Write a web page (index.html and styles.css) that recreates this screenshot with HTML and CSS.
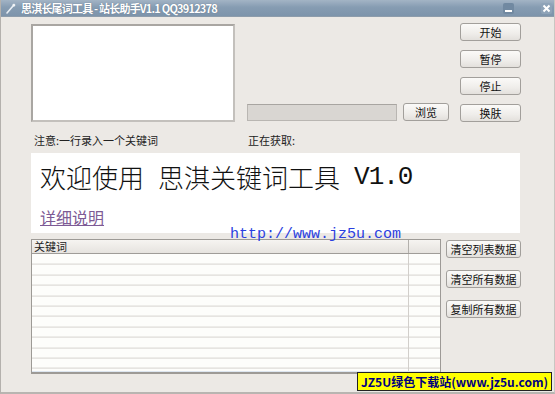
FILE: index.html
```html
<!DOCTYPE html>
<html lang="zh-CN">
<head>
    <meta charset="UTF-8">
    <title>思淇长尾词工具 - 站长助手V1.1 QQ3912378</title>
    <link rel="stylesheet" href="styles.css">
</head>
<body>
    <div class="window">
        <div class="titlebar">
            <svg class="app-icon" width="10" height="11" viewBox="0 0 10 11">
                <path d="M1 10 L7 3" stroke="#e8eef4" stroke-width="1.6" stroke-linecap="round"/>
                <path d="M6 2 L8 0.5 L9.5 2 L8 4 Z" fill="#f4f6f8"/>
            </svg>
            <span class="title">思淇长尾词工具 - 站长助手V1.1 QQ3912378</span>
            <span class="tb-btn tb-min"><i></i></span>
            <span class="tb-btn tb-close">
                <svg width="9" height="9" viewBox="0 0 9 9"><path d="M1.5 1.5 L7.5 7.5 M7.5 1.5 L1.5 7.5" stroke="#fff" stroke-width="2"/></svg>
            </span>
        </div>

        <div class="content">
            <div class="top">
                <div class="input-box"></div>
                <div class="mid">
                    <div class="path-field"></div>
                    <button class="btn btn-browse">浏览</button>
                </div>
                <div class="side">
                    <button class="btn">开始</button>
                    <button class="btn">暂停</button>
                    <button class="btn">停止</button>
                    <button class="btn">换肤</button>
                </div>
            </div>

            <div class="labels">
                <span class="note">注意:一行录入一个关键词</span>
                <span class="status">正在获取:</span>
            </div>

            <div class="banner">
                <div class="welcome">
                    <span>欢迎使用</span>
                    <span>思淇关键词工具</span>
                    <span class="ver">V1.0</span>
                </div>
                <a class="detail" href="#">详细说明</a>
            </div>

            <div class="bottom">
                <div class="list">
                    <div class="list-head">
                        <span class="col-main">关键词</span>
                        <span class="col-side"></span>
                    </div>
                    <div class="list-body">
                        <div class="col-line"></div>
                    </div>
                </div>
                <div class="side side-wide">
                    <button class="btn">清空列表数据</button>
                    <button class="btn">清空所有数据</button>
                    <button class="btn">复制所有数据</button>
                </div>
            </div>

            <div class="url">http://www.jz5u.com</div>
        </div>

        <div class="stamp">JZ5U绿色下载站(www.jz5u.com)</div>
    </div>
</body>
</html>
```

FILE: styles.css
```css
body {
    margin: 0;
    background: #ece9e5;
    font-family: "Noto Sans CJK SC", "DejaVu Sans", sans-serif;
    font-size: 12px;
    color: #222;
}
.window {
    position: relative;
    width: 555px;
    height: 394px;
    box-sizing: border-box;
    border-left: 1px solid #b4b1ad;
    border-right: 1px solid #c9c6c2;
    border-bottom: 2px solid #b8b5b1;
    background: #ece9e5;
    overflow: hidden;
}

/* title bar */
.titlebar {
    height: 16px;
    display: flex;
    align-items: center;
    padding-left: 5px;
    background: linear-gradient(#a3b4c5, #869cb2 45%, #7d94ab);
    border-bottom: 1px solid #8d9cab;
}
.app-icon {
    margin-right: 5px;
}
.title {
    color: #fff;
    font-size: 11px;
    font-weight: bold;
    line-height: 15px;
    letter-spacing: -0.8px;
    text-shadow: 0 0 1px #56697c;
    flex: 1;
}
.tb-btn {
    width: 11px;
    height: 11px;
    border-radius: 2px;
    background: #7189a1;
    display: flex;
    align-items: center;
    justify-content: center;
}
.tb-min {
    margin-right: 27px;
    align-items: flex-end;
}
.tb-min i {
    display: block;
    width: 7px;
    height: 2px;
    margin-bottom: 2px;
    background: #fff;
}
.tb-close {
    margin-right: 2px;
    background: #8ea3b8;
}

/* main area */
.content {
    position: relative;
    padding: 6px 0 0 30px;
}
.top {
    display: flex;
}
.input-box {
    width: 200px;
    height: 94px;
    margin-top: 1px;
    background: #fff;
    border: 2px solid #a9a6a2;
    border-right-color: #c3c0bc;
    border-bottom-color: #c3c0bc;
}
.mid {
    display: flex;
    align-items: flex-end;
    margin-left: 12px;
    padding-bottom: 1px;
}
.path-field {
    width: 148px;
    height: 15px;
    background: #d9d6d2;
    border: 1px solid #b9b6b2;
    border-top-color: #a8a5a1;
    margin-right: 6px;
}
.btn {
    font-family: "Noto Sans CJK SC", sans-serif;
    font-size: 11px;
    line-height: 14px;
    color: #111;
    height: 18px;
    padding: 0;
    background: linear-gradient(#fbfaf8, #efedea 60%, #e3e0dc);
    border: 1px solid #a29f9b;
    border-radius: 3px;
}
.btn-browse {
    width: 46px;
}
.side {
    display: flex;
    flex-direction: column;
    gap: 9px;
    margin-left: 11px;
}
.side .btn {
    width: 61px;
}

.labels {
    display: flex;
    padding: 10px 0 0 3px;
    height: 18px;
    font-size: 11px;
    line-height: 16px;
}
.note {
    width: 214px;
}

.banner {
    width: 489px;
    height: 80px;
    margin-top: 3px;
    background: #fff;
    box-sizing: border-box;
    padding: 6px 0 0 9px;
}
.welcome {
    display: flex;
    gap: 14px;
    font-size: 26px;
    font-weight: 300;
    line-height: 36px;
    color: #111;
}
.welcome .ver {
    font-family: "Liberation Mono", monospace;
    letter-spacing: -1px;
}
.detail {
    display: inline-block;
    margin-top: 12px;
    font-size: 16px;
    line-height: 20px;
    color: #7d5a95;
}

.bottom {
    display: flex;
    margin-top: 6px;
}
.list {
    width: 410px;
    height: 135px;
    box-sizing: border-box;
    border: 1px solid #9d9a96;
    border-bottom-width: 2px;
    background: #fff;
    display: flex;
    flex-direction: column;
}
.list-head {
    display: flex;
    height: 13px;
    background: linear-gradient(#f6f4f1, #e6e3df);
    border-bottom: 1px solid #9f9c98;
    font-size: 11px;
    line-height: 13px;
}
.col-main {
    width: 374px;
    padding-left: 2px;
    border-right: 1px solid #b3b0ac;
}
.list-body {
    flex: 1;
    position: relative;
    background: repeating-linear-gradient(#fdfdfb 0, #fdfdfb 9.4px, #d6d3cf 9.4px, #d6d3cf 10.4px);
    background-position: 0 0.6px;
    border-bottom: 1px solid #dde6f0;
}
.col-line {
    position: absolute;
    top: 0;
    bottom: 0;
    left: 376px;
    width: 1px;
    background: #d2cfcb;
}
.side-wide {
    margin-left: 5px;
    margin-top: 1px;
    gap: 12px;
}
.side-wide .btn {
    width: 75px;
}

.url {
    position: absolute;
    left: 229px;
    top: 209px;
    font-family: "Liberation Mono", monospace;
    font-size: 15px;
    color: #2b3fe0;
}

.stamp {
    position: absolute;
    right: 2px;
    bottom: 1px;
    height: 17px;
    padding: 0 3px;
    background: #ffff00;
    border: 1px solid #222;
    color: #000080;
    font-family: "Noto Sans CJK SC", sans-serif;
    font-size: 12px;
    font-weight: bold;
    line-height: 17px;
}
```
